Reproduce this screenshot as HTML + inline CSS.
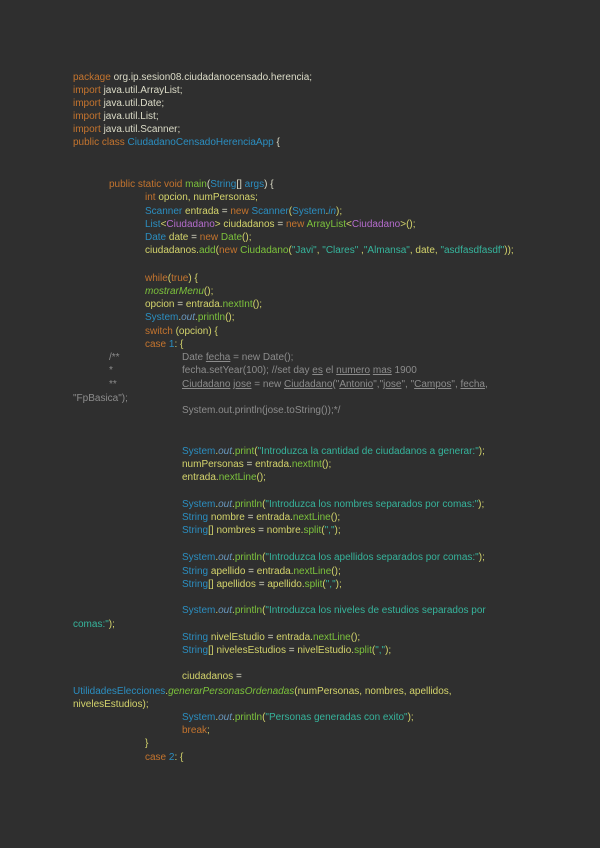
<!DOCTYPE html>
<html><head><meta charset="utf-8"><style>
html,body{margin:0;padding:0}
body{width:600px;height:848px;background:#2f2f2f;position:relative;overflow:hidden;font-family:"Liberation Sans",sans-serif;font-size:10px;color:#dcdcc8}
.l{position:absolute;white-space:pre;line-height:12px}
.k{color:#c4742e}.c{color:#2b8ec0}.v{color:#d4d46c}.m{color:#7cc23c}.s{color:#36b49c}.p{color:#b46ccc}.g{color:#8c8c8c}.i{font-style:italic}.o{color:#6a9ac0;font-style:italic}.u{text-decoration:underline}.w{color:#dcdcc8}
</style></head><body>
<div class="l" style="left:73px;top:72px"><span class="k">package</span> org.ip.sesion08.ciudadanocensado.herencia;</div>
<div class="l" style="left:73px;top:85px"><span class="k">import</span> java.util.ArrayList;</div>
<div class="l" style="left:73px;top:98px"><span class="k">import</span> java.util.Date;</div>
<div class="l" style="left:73px;top:111px"><span class="k">import</span> java.util.List;</div>
<div class="l" style="left:73px;top:124px"><span class="k">import</span> java.util.Scanner;</div>
<div class="l" style="left:73px;top:137px"><span class="k">public class</span> <span class="c">CiudadanoCensadoHerenciaApp</span> {</div>
<div class="l" style="left:109px;top:179px"><span class="k">public static void</span> <span class="m">main</span>(<span class="c">String</span>[] <span class="c">args</span>) {</div>
<div class="l v" style="left:145px;top:192px"><span class="k">int</span> opcion, numPersonas;</div>
<div class="l v" style="left:145px;top:206px"><span class="c">Scanner</span> entrada <span class="w">=</span> <span class="k">new</span> <span class="c">Scanner</span>(<span class="c">System</span>.<span class="c i">in</span>);</div>
<div class="l v" style="left:145px;top:219px"><span class="c">List</span>&lt;<span class="p">Ciudadano</span>&gt; ciudadanos <span class="w">=</span> <span class="k">new</span> <span class="m">ArrayList</span>&lt;<span class="p">Ciudadano</span>&gt;();</div>
<div class="l v" style="left:145px;top:232px"><span class="c">Date</span> date <span class="w">=</span> <span class="k">new</span> <span class="m">Date</span>();</div>
<div class="l v" style="left:145px;top:245px">ciudadanos.<span class="m">add</span>(<span class="k">new</span> <span class="m">Ciudadano</span>(<span class="s">"Javi"</span>, <span class="s">"Clares"</span> ,<span class="s">"Almansa"</span>, date, <span class="s">"asdfasdfasdf"</span>));</div>
<div class="l v" style="left:145px;top:273px"><span class="k">while</span>(<span class="k">true</span>) {</div>
<div class="l v" style="left:145px;top:286px"><span class="m i">mostrarMenu</span>();</div>
<div class="l v" style="left:145px;top:299px">opcion <span class="w">=</span> entrada.<span class="m">nextInt</span>();</div>
<div class="l v" style="left:145px;top:312px"><span class="c">System</span>.<span class="o">out</span>.<span class="m">println</span>();</div>
<div class="l v" style="left:145px;top:326px"><span class="k">switch</span> (opcion) {</div>
<div class="l v" style="left:145px;top:339px"><span class="k">case</span> <span class="c">1</span>: {</div>
<div class="l g" style="left:109px;top:352px">/**</div>
<div class="l g" style="left:182px;top:352px">Date <span class="u">fecha</span> = new Date();</div>
<div class="l g" style="left:109px;top:365px">*</div>
<div class="l g" style="left:182px;top:365px">fecha.setYear(100); //set day <span class="u">es</span> el <span class="u">numero</span> <span class="u">mas</span> 1900</div>
<div class="l g" style="left:109px;top:379px">**</div>
<div class="l g" style="left:182px;top:379px"><span class="u">Ciudadano</span> <span class="u">jose</span> = new <span class="u">Ciudadano</span>("<span class="u">Antonio</span>","<span class="u">jose</span>", "<span class="u">Campos</span>", <span class="u">fecha</span>,</div>
<div class="l g" style="left:73px;top:393px">"FpBasica");</div>
<div class="l g" style="left:182px;top:405px">System.out.println(jose.toString());*/</div>
<div class="l v" style="left:182px;top:446px"><span class="c">System</span>.<span class="o">out</span>.<span class="m">print</span>(<span class="s">"Introduzca la cantidad de ciudadanos a generar:"</span>);</div>
<div class="l v" style="left:182px;top:459px">numPersonas <span class="w">=</span> entrada.<span class="m">nextInt</span>();</div>
<div class="l v" style="left:182px;top:472px">entrada.<span class="m">nextLine</span>();</div>
<div class="l v" style="left:182px;top:499px"><span class="c">System</span>.<span class="o">out</span>.<span class="m">println</span>(<span class="s">"Introduzca los nombres separados por comas:"</span>);</div>
<div class="l v" style="left:182px;top:512px"><span class="c">String</span> nombre <span class="w">=</span> entrada.<span class="m">nextLine</span>();</div>
<div class="l v" style="left:182px;top:525px"><span class="c">String</span>[] nombres <span class="w">=</span> nombre.<span class="m">split</span>(<span class="s">","</span>);</div>
<div class="l v" style="left:182px;top:552px"><span class="c">System</span>.<span class="o">out</span>.<span class="m">println</span>(<span class="s">"Introduzca los apellidos separados por comas:"</span>);</div>
<div class="l v" style="left:182px;top:566px"><span class="c">String</span> apellido <span class="w">=</span> entrada.<span class="m">nextLine</span>();</div>
<div class="l v" style="left:182px;top:579px"><span class="c">String</span>[] apellidos <span class="w">=</span> apellido.<span class="m">split</span>(<span class="s">","</span>);</div>
<div class="l v" style="left:182px;top:605px"><span class="c">System</span>.<span class="o">out</span>.<span class="m">println</span>(<span class="s">"Introduzca los niveles de estudios separados por</span></div>
<div class="l v" style="left:73px;top:619px"><span class="s">comas:"</span>);</div>
<div class="l v" style="left:182px;top:632px"><span class="c">String</span> nivelEstudio <span class="w">=</span> entrada.<span class="m">nextLine</span>();</div>
<div class="l v" style="left:182px;top:645px"><span class="c">String</span>[] nivelesEstudios <span class="w">=</span> nivelEstudio.<span class="m">split</span>(<span class="s">","</span>);</div>
<div class="l v" style="left:182px;top:671px">ciudadanos <span class="w">=</span></div>
<div class="l v" style="left:73px;top:686px"><span class="c">UtilidadesElecciones</span>.<span class="m i">generarPersonasOrdenadas</span>(numPersonas, nombres, apellidos,</div>
<div class="l v" style="left:73px;top:699px">nivelesEstudios);</div>
<div class="l v" style="left:182px;top:712px"><span class="c">System</span>.<span class="o">out</span>.<span class="m">println</span>(<span class="s">"Personas generadas con exito"</span>);</div>
<div class="l v" style="left:182px;top:725px"><span class="k">break</span>;</div>
<div class="l v" style="left:145px;top:738px">}</div>
<div class="l v" style="left:145px;top:752px"><span class="k">case</span> <span class="c">2</span>: {</div>
</body></html>
